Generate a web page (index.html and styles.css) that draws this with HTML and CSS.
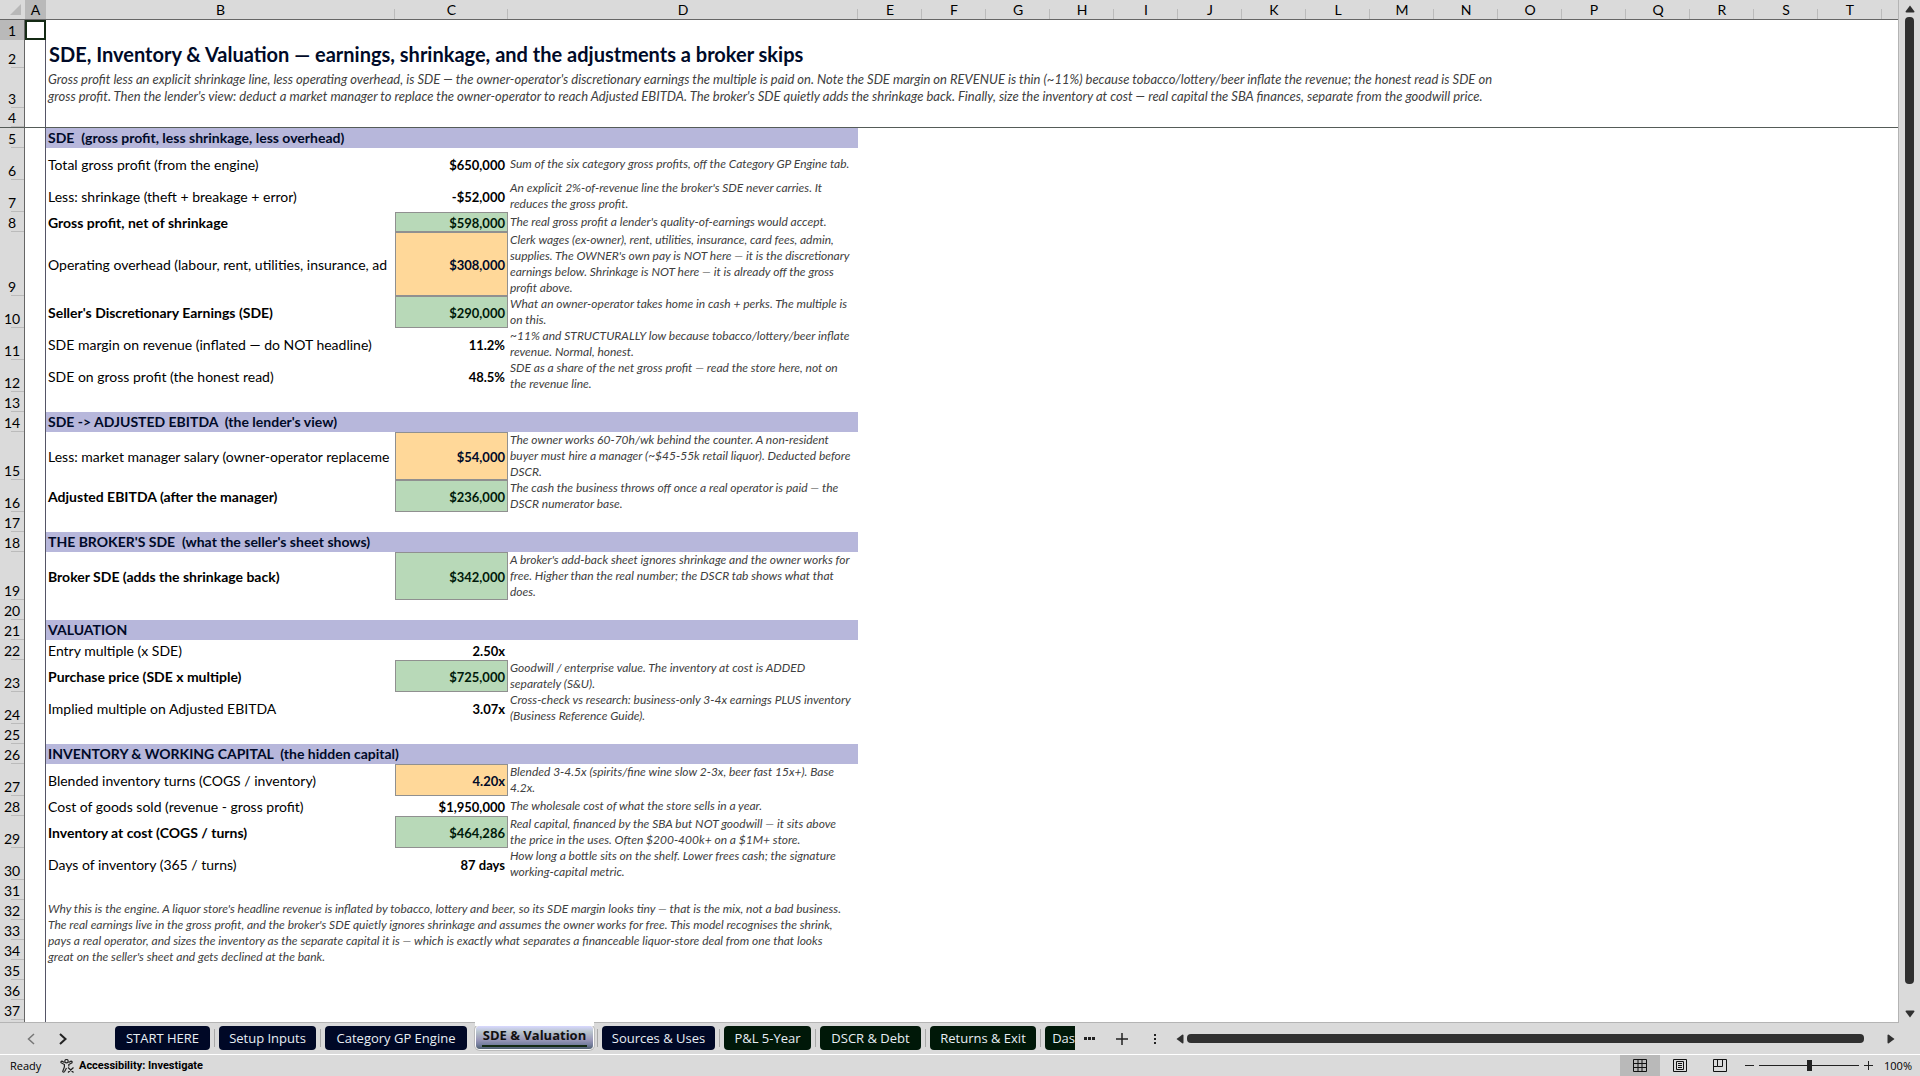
FILE: index.html
```html
<!DOCTYPE html>
<html lang="en">
<head>
    <meta charset="utf-8">
    <meta name="viewport" content="width=device-width, initial-scale=1">
    <title>SDE &amp; Valuation</title>
    <link rel="stylesheet" href="styles.css">
</head>
<body>
    <main class="workbook">
        <div class="grid-area">
            <div class="sheet">
                <table>
                    <colgroup>
                        <col class="w-head"><col class="w-a"><col class="w-b"><col class="w-c"><col class="w-d">
                        <col class="w-std"><col class="w-std"><col class="w-std"><col class="w-std"><col class="w-std"><col class="w-std"><col class="w-std"><col class="w-std">
                        <col class="w-std"><col class="w-std"><col class="w-std"><col class="w-std"><col class="w-std"><col class="w-std"><col class="w-std"><col class="w-std"><col>
                    </colgroup>
                    <thead>
                        <tr>
                            <th class="corner"><svg width="11" height="11" viewBox="0 0 11 11"><path d="M11 0V11H0Z" fill="#b8b8b8"/></svg></th>
                            <th class="selected">A</th><th>B</th><th>C</th><th>D</th><th>E</th><th>F</th><th>G</th><th>H</th><th>I</th><th>J</th><th>K</th>
                            <th>L</th><th>M</th><th>N</th><th>O</th><th>P</th><th>Q</th><th>R</th><th>S</th><th>T</th><th class="last"></th>
                        </tr>
                    </thead>
                    <tbody>
                        <tr><th class="selected">1</th><td class="cursor"></td><td colspan="20"></td></tr>
                        <tr class="h28"><th>2</th><td></td><td colspan="20" class="title">SDE, Inventory &amp; Valuation — earnings, shrinkage, and the adjustments a broker skips</td></tr>
                        <tr class="h40"><th>3</th><td></td><td colspan="20" class="intro">Gross profit less an explicit shrinkage line, less operating overhead, is SDE — the owner-operator's discretionary earnings the multiple is paid on. Note the SDE margin on REVENUE is thin (~11%) because tobacco/lottery/beer inflate the revenue; the honest read is SDE on<br>gross profit. Then the lender's view: deduct a market manager to replace the owner-operator to reach Adjusted EBITDA. The broker's SDE quietly adds the shrinkage back. Finally, size the inventory at cost — real capital the SBA finances, separate from the goodwill price.</td></tr>
                        <tr class="freeze"><th>4</th><td></td><td colspan="20"></td></tr>
                        <tr><th>5</th><td></td><td colspan="3" class="section">SDE&nbsp; (gross profit, less shrinkage, less overhead)</td></tr>
                        <tr class="h32"><th>6</th><td></td><td class="label">Total gross profit (from the engine)</td><td class="value">$650,000</td><td class="note">Sum of the six category gross profits, off the Category GP Engine tab.</td></tr>
                        <tr class="h32"><th>7</th><td></td><td class="label">Less: shrinkage (theft + breakage + error)</td><td class="value">-$52,000</td><td class="note">An explicit 2%-of-revenue line the broker's SDE never carries. It<br>reduces the gross profit.</td></tr>
                        <tr><th>8</th><td></td><td class="label strong">Gross profit, net of shrinkage</td><td class="value result">$598,000</td><td class="note">The real gross profit a lender's quality-of-earnings would accept.</td></tr>
                        <tr class="h64"><th>9</th><td></td><td class="label">Operating overhead (labour, rent, utilities, insurance, ad</td><td class="value entry">$308,000</td><td class="note">Clerk wages (ex-owner), rent, utilities, insurance, card fees, admin,<br>supplies. The OWNER's own pay is NOT here — it is the discretionary<br>earnings below. Shrinkage is NOT here — it is already off the gross<br>profit above.</td></tr>
                        <tr class="h32"><th>10</th><td></td><td class="label strong">Seller's Discretionary Earnings (SDE)</td><td class="value result">$290,000</td><td class="note">What an owner-operator takes home in cash + perks. The multiple is<br>on this.</td></tr>
                        <tr class="h32"><th>11</th><td></td><td class="label">SDE margin on revenue (inflated — do NOT headline)</td><td class="value">11.2%</td><td class="note">~11% and STRUCTURALLY low because tobacco/lottery/beer inflate<br>revenue. Normal, honest.</td></tr>
                        <tr class="h32"><th>12</th><td></td><td class="label">SDE on gross profit (the honest read)</td><td class="value">48.5%</td><td class="note">SDE as a share of the net gross profit — read the store here, not on<br>the revenue line.</td></tr>
                        <tr><th>13</th><td></td></tr>
                        <tr><th>14</th><td></td><td colspan="3" class="section">SDE -&gt; ADJUSTED EBITDA&nbsp; (the lender's view)</td></tr>
                        <tr class="h48"><th>15</th><td></td><td class="label">Less: market manager salary (owner-operator replaceme</td><td class="value entry">$54,000</td><td class="note">The owner works 60-70h/wk behind the counter. A non-resident<br>buyer must hire a manager (~$45-55k retail liquor). Deducted before<br>DSCR.</td></tr>
                        <tr class="h32"><th>16</th><td></td><td class="label strong">Adjusted EBITDA (after the manager)</td><td class="value result">$236,000</td><td class="note">The cash the business throws off once a real operator is paid — the<br>DSCR numerator base.</td></tr>
                        <tr><th>17</th><td></td></tr>
                        <tr><th>18</th><td></td><td colspan="3" class="section">THE BROKER'S SDE&nbsp; (what the seller's sheet shows)</td></tr>
                        <tr class="h48"><th>19</th><td></td><td class="label strong">Broker SDE (adds the shrinkage back)</td><td class="value result">$342,000</td><td class="note">A broker's add-back sheet ignores shrinkage and the owner works for<br>free. Higher than the real number; the DSCR tab shows what that<br>does.</td></tr>
                        <tr><th>20</th><td></td></tr>
                        <tr><th>21</th><td></td><td colspan="3" class="section">VALUATION</td></tr>
                        <tr><th>22</th><td></td><td class="label">Entry multiple (x SDE)</td><td class="value">2.50x</td></tr>
                        <tr class="h32"><th>23</th><td></td><td class="label strong">Purchase price (SDE x multiple)</td><td class="value result">$725,000</td><td class="note">Goodwill / enterprise value. The inventory at cost is ADDED<br>separately (S&amp;U).</td></tr>
                        <tr class="h32"><th>24</th><td></td><td class="label">Implied multiple on Adjusted EBITDA</td><td class="value">3.07x</td><td class="note">Cross-check vs research: business-only 3-4x earnings PLUS inventory<br>(Business Reference Guide).</td></tr>
                        <tr><th>25</th><td></td></tr>
                        <tr><th>26</th><td></td><td colspan="3" class="section">INVENTORY &amp; WORKING CAPITAL&nbsp; (the hidden capital)</td></tr>
                        <tr class="h32"><th>27</th><td></td><td class="label">Blended inventory turns (COGS / inventory)</td><td class="value entry">4.20x</td><td class="note">Blended 3-4.5x (spirits/fine wine slow 2-3x, beer fast 15x+). Base<br>4.2x.</td></tr>
                        <tr><th>28</th><td></td><td class="label">Cost of goods sold (revenue - gross profit)</td><td class="value">$1,950,000</td><td class="note">The wholesale cost of what the store sells in a year.</td></tr>
                        <tr class="h32"><th>29</th><td></td><td class="label strong">Inventory at cost (COGS / turns)</td><td class="value result">$464,286</td><td class="note">Real capital, financed by the SBA but NOT goodwill — it sits above<br>the price in the uses. Often $200-400k+ on a $1M+ store.</td></tr>
                        <tr class="h32"><th>30</th><td></td><td class="label">Days of inventory (365 / turns)</td><td class="value">87 days</td><td class="note">How long a bottle sits on the shelf. Lower frees cash; the signature<br>working-capital metric.</td></tr>
                        <tr><th>31</th><td></td></tr>
                        <tr><th>32</th><td></td><td colspan="3" rowspan="4" class="note closing">Why this is the engine. A liquor store's headline revenue is inflated by tobacco, lottery and beer, so its SDE margin looks tiny — that is the mix, not a bad business.<br>The real earnings live in the gross profit, and the broker's SDE quietly ignores shrinkage and assumes the owner works for free. This model recognises the shrink,<br>pays a real operator, and sizes the inventory as the separate capital it is — which is exactly what separates a financeable liquor-store deal from one that looks<br>great on the seller's sheet and gets declined at the bank.</td></tr>
                        <tr><th>33</th><td></td></tr>
                        <tr><th>34</th><td></td></tr>
                        <tr><th>35</th><td></td></tr>
                        <tr><th>36</th><td></td></tr>
                        <tr><th>37</th><td></td></tr>
                        <tr><th></th><td></td></tr>
                    </tbody>
                </table>
            </div>
            <div class="vscroll">
                <svg width="10" height="8" viewBox="0 0 10 8"><path d="M5 .5L9.500 6.500Q9.500 7.500 8.500 7.500H1.500Q.5 7.500 .5 6.500Z" fill="#303030"/></svg>
                <div class="thumb"></div>
                <svg width="10" height="8" viewBox="0 0 10 8"><path d="M5 7.500L9.500 1.500Q9.500 .5 8.500 .5H1.500Q.5 .5 .5 1.500Z" fill="#303030"/></svg>
            </div>
        </div>

        <div class="tab-bar">
            <div class="tab-nav">
                <button type="button" aria-label="Previous sheet"><svg width="8" height="12" viewBox="0 0 8 12"><path d="M7 1L1.500 6L7 11" fill="none" stroke="#777" stroke-width="1.500"/></svg></button>
                <button type="button" aria-label="Next sheet"><svg width="8" height="12" viewBox="0 0 8 12"><path d="M1 1L6.500 6L1 11" fill="none" stroke="#222" stroke-width="2"/></svg></button>
            </div>
            <nav class="tabs">
                <button type="button" class="tab w95">START HERE</button>
                <button type="button" class="tab w97">Setup Inputs</button>
                <button type="button" class="tab w142">Category GP Engine</button>
                <button type="button" class="tab active w117"><span>SDE &amp; Valuation</span></button>
                <button type="button" class="tab w113">Sources &amp; Uses</button>
                <button type="button" class="tab green w87">P&amp;L 5-Year</button>
                <button type="button" class="tab green w101">DSCR &amp; Debt</button>
                <button type="button" class="tab green w106">Returns &amp; Exit</button>
                <button type="button" class="tab green cut">Das</button>
            </nav>
            <div class="tab-tools">
                <button type="button" aria-label="More sheets"><svg width="12" height="4" viewBox="0 0 12 4"><path d="M0 0h3v3h-3zM4 0h3v3h-3zM8 0h3v3h-3z" fill="#222"/></svg></button>
                <button type="button" aria-label="New sheet"><svg width="12" height="12" viewBox="0 0 12 12"><path d="M6 0V12M0 6H12" stroke="#222" stroke-width="1.500"/></svg></button>
                <button type="button" aria-label="Resize tabs"><svg width="3" height="12" viewBox="0 0 3 12"><path d="M0 1h2v2h-2zM0 5h2v2h-2zM0 9h2v2h-2z" fill="#222"/></svg></button>
            </div>
            <div class="hscroll">
                <svg width="8" height="10" viewBox="0 0 8 10"><path d="M.5 5L6.500 .5Q7.500 .5 7.500 1.500V8.500Q7.500 9.500 6.500 9.500Z" fill="#303030"/></svg>
                <div class="thumb"></div>
                <svg width="8" height="10" viewBox="0 0 8 10"><path d="M7.500 5L1.500 .5Q.5 .5 .5 1.500V8.500Q.5 9.500 1.500 9.500Z" fill="#303030"/></svg>
            </div>
        </div>

        <footer class="status">
            <span class="ready">Ready</span>
            <button type="button" class="access">
                <svg width="15" height="14" viewBox="0 0 15 14" fill="none" stroke="#222" stroke-width="1.200"><circle cx="6.500" cy="2.200" r="1.700"/><path d="M4.500 3.500L2 2.200Q.6 2.200 1 3.700L4.400 5.500V8L2.700 12.500Q3.500 14 4.600 12.500L6.500 9M8.500 3.500L11 2.200Q12.600 2.400 12 3.700L8.800 5.500V7.500M8 8.500L13.500 13.500M13.500 8.500L8 13.500"/></svg>
                Accessibility: Investigate
            </button>
            <div class="views">
                <button type="button" class="on" aria-label="Normal"><svg width="14" height="13" viewBox="0 0 14 13" fill="none" stroke="#111"><path d="M.5 .5h13v12h-13zM5 .5v12M9 .5v12M.5 4.500h13M.5 8.500h13"/></svg></button>
                <button type="button" aria-label="Page layout"><svg width="14" height="13" viewBox="0 0 14 13" fill="none" stroke="#111"><path d="M.5 .5h13v12h-13zM3.500 2.500h7v8h-7zM5 4.500h4M5 6.500h4M5 8.500h4"/></svg></button>
                <button type="button" aria-label="Page break preview"><svg width="14" height="13" viewBox="0 0 14 13" fill="none" stroke="#111"><path d="M.5 .5h13v12h-13zM4.500 .5v7h5v-7M.5 7.500h4"/></svg></button>
            </div>
            <div class="zoom">
                <button type="button" aria-label="Zoom out"><svg width="9" height="9" viewBox="0 0 9 9"><path d="M0 4.500H9" stroke="#222"/></svg></button>
                <input type="range" min="0" max="100" value="50" aria-label="Zoom">
                <button type="button" aria-label="Zoom in"><svg width="9" height="9" viewBox="0 0 9 9"><path d="M0 4.500H9M4.500 0V9" stroke="#222"/></svg></button>
            </div>
            <span class="percent">100%</span>
        </footer>
    </main>
</body>
</html>
```

FILE: styles.css
```css
* {
    box-sizing: border-box;
}

body {
    margin: 0;
    background: #dadada;
    color: #000;
    font-family: Lato, "Open Sans", sans-serif;
}

button {
    border: 0;
    padding: 0;
    background: none;
    color: inherit;
    font: inherit;
}

svg {
    display: block;
}

.workbook {
    display: flex;
    flex-direction: column;
    height: 100vh;
    overflow: hidden;
}

/* cell grid */
.grid-area {
    display: flex;
    flex: 1;
    min-height: 0;
    overflow: hidden;
}

.sheet {
    flex: 1;
    min-width: 0;
    overflow: hidden;
    background: #fff;
    border-right: 1px solid #b4b4b4;
    border-bottom: 1px solid #b4b4b4;
}

table {
    width: 100%;
    table-layout: fixed;
    border-collapse: separate;
    border-spacing: 0;
}

.w-head { width: 25px; }
.w-a { width: 21px; }
.w-b { width: 349px; }
.w-c { width: 113px; }
.w-d { width: 350px; }
.w-std { width: 64px; }

tr {
    height: 20px;
}

.h28 { height: 28px; }
.h32 { height: 32px; }
.h40 { height: 40px; }
.h48 { height: 48px; }
.h64 { height: 64px; }

th,
td {
    padding: 0;
    white-space: nowrap;
}

th {
    background: #dadada;
    font-size: 14px;
    line-height: 18px;
    font-weight: 400;
}

thead th {
    border-bottom: 1px solid #666;
    background: linear-gradient(#bbb, #bbb) right bottom / 1px 10px no-repeat #dadada;
}

thead .corner {
    padding-left: 10px;
    background: #dadada;
}

thead .last {
    background: #dadada;
}

tbody th {
    vertical-align: bottom;
    border-right: 1px solid #666;
    background: linear-gradient(#bbb, #bbb) right bottom / 13px 1px no-repeat #dadada;
}

thead .selected,
tbody .selected {
    background: #b9b9b9;
}

tbody th + td {
    border-right: 1px solid #555566;
}

tbody th + .cursor {
    border: 2px solid #142a14;
}

.freeze th,
.freeze td {
    border-bottom: 1px solid #555c58;
}

.title {
    padding-left: 3px;
    color: #000a28;
    font-size: 20px;
    line-height: 24px;
    font-weight: 700;
}

.intro {
    padding-left: 2px;
    color: #404040;
    font-size: 13px;
    line-height: 17px;
    font-style: italic;
}

.section {
    padding-left: 2px;
    background: #b7b7db;
    color: #000a28;
    font-size: 14px;
    line-height: 18px;
    font-weight: 700;
}

.label {
    padding: 2px 0 0 2px;
    font-size: 14px;
    line-height: 16px;
}

.strong {
    font-weight: 700;
}

.value {
    padding: 2px 3px 0 0;
    font-size: 13px;
    line-height: 16px;
    font-weight: 700;
    text-align: right;
}

.result,
.entry {
    padding-right: 2px;
    border: 1px solid #909090;
}

.result {
    background: #b8d9b8;
    color: #001a0a;
}

.entry {
    background: #ffd899;
    color: #000a28;
}

.note {
    padding-left: 2px;
    color: #404040;
    font-size: 12px;
    line-height: 16px;
    font-style: italic;
}

.closing {
    padding-top: 1px;
    vertical-align: top;
}

.thumb {
    flex: 1;
    background: #303030;
    border-radius: 4px;
}

.vscroll {
    display: flex;
    flex-direction: column;
    align-items: center;
    gap: 4px;
    width: 21px;
    padding: 5px 0;
}

.vscroll .thumb {
    width: 9px;
    margin-bottom: 22px;
}

/* sheet tabs */
.tab-bar {
    display: flex;
    align-items: center;
    height: 32px;
    border-bottom: 1px solid #fff;
    font-family: "Open Sans", sans-serif;
}

.tab-nav {
    display: flex;
    gap: 24px;
    width: 115px;
    padding-left: 27px;
}

.tabs {
    position: relative;
    display: flex;
    align-self: stretch;
    gap: 9px;
    width: 960px;
    margin-top: -1px;
    padding-top: 4px;
    overflow: hidden;
}

.tab {
    position: relative;
    flex: none;
    height: 24px;
    border-radius: 4px;
    background: #000826;
    color: #e8eef4;
    font-size: 13px;
    line-height: 23px;
}

/* divider in the gap before each tab */
.tab + .tab::before {
    content: "";
    position: absolute;
    top: 3px;
    left: -5px;
    width: 1px;
    height: 18px;
    background: #a8a8a8;
}

.green {
    background: #001808;
}

.w87 { width: 87px; }
.w95 { width: 95px; }
.w97 { width: 97px; }
.w101 { width: 101px; }
.w106 { width: 106px; }
.w113 { width: 113px; }
.w117 { width: 117px; }
.w142 { width: 142px; }

.cut {
    flex: 1;
    border-radius: 4px 0 0 4px;
    text-align: right;
}

.active {
    height: 23px;
    background: linear-gradient(#d8d8ff, #b8c4cc 25%, #9a98b8 60%, #7880a0 80%, #506070);
    box-shadow: 0 0 0 1px #fff, 0 0 0 2px #bbb;
    color: #111;
    font-weight: 700;
    line-height: 18px;
}

.active span {
    display: block;
    height: 21px;
    margin: 0 6px 2px;
    border-bottom: 2px solid #142a14;
}

/* opens the tab into the sheet above it */
.tab + .active::before {
    top: -4px;
    left: -1px;
    width: 119px;
    height: 4px;
    background: #fff;
}

.tab-tools {
    display: flex;
    align-items: center;
    width: 101px;
    padding-left: 9px;
    gap: 20px;
}

.tab-tools button:last-child {
    margin-left: 6px;
}

.hscroll {
    display: flex;
    flex: 1;
    align-items: center;
    gap: 3px;
    padding-right: 25px;
}

.hscroll .thumb {
    height: 9px;
    margin-right: 20px;
}

/* status bar */
.status {
    display: flex;
    align-items: center;
    height: 21px;
    padding: 0 8px 0 10px;
    font-family: "Open Sans", sans-serif;
    font-size: 11px;
    line-height: 20px;
}

.ready {
    width: 50px;
}

.access {
    display: flex;
    align-items: center;
    gap: 4px;
    font-family: Roboto, sans-serif;
    font-weight: 700;
}

.views {
    display: flex;
    align-self: stretch;
    margin-left: auto;
}

.views button {
    display: flex;
    align-items: center;
    justify-content: center;
    width: 40px;
}

.views .on {
    background: #b9b9b9;
}

.zoom {
    display: flex;
    align-items: center;
    gap: 5px;
    margin-left: 5px;
}

.zoom input {
    appearance: none;
    width: 100px;
    height: 11px;
    margin: 0;
    background: linear-gradient(#222, #222) center / 100% 1px no-repeat;
}

.zoom input::-webkit-slider-thumb {
    appearance: none;
    width: 5px;
    height: 11px;
    background: #222;
}

.percent {
    width: 39px;
    text-align: right;
}
```
